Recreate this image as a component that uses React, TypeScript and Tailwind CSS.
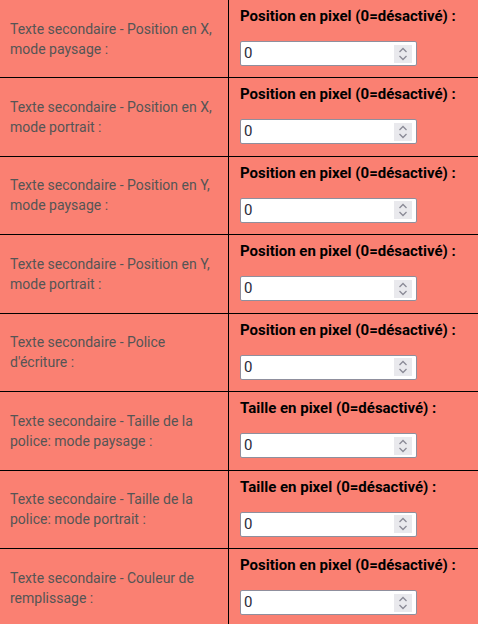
const rows = [
  { left: "Texte secondaire - Position en X, mode paysage :", label: "Position en pixel (0=désactivé) :" },
  { left: "Texte secondaire - Position en X, mode portrait :", label: "Position en pixel (0=désactivé) :" },
  { left: "Texte secondaire - Position en Y, mode paysage :", label: "Position en pixel (0=désactivé) :" },
  { left: "Texte secondaire - Position en Y, mode portrait :", label: "Position en pixel (0=désactivé) :" },
  { left: "Texte secondaire - Police d'écriture :", label: "Position en pixel (0=désactivé) :" },
  { left: "Texte secondaire - Taille de la police: mode paysage :", label: "Taille en pixel (0=désactivé) :" },
  { left: "Texte secondaire - Taille de la police: mode portrait :", label: "Taille en pixel (0=désactivé) :" },
  { left: "Texte secondaire - Couleur de remplissage :", label: "Position en pixel (0=désactivé) :" },
];

function NumberBox() {
  return (
    <div className="flex items-center w-[177px] h-[25px] bg-white border border-[#8f8f9d] rounded-[2px] pl-[3px] pr-[4px]">
      <input
        type="text"
        defaultValue="0"
        className="flex-1 min-w-0 outline-none bg-transparent text-[15px] text-[#2b2b3a] font-['Roboto',sans-serif]"
      />
      <div className="w-[18px] h-[18px] bg-[#e9e9ed] flex flex-col items-center justify-center gap-[2px]">
        <svg width="10" height="6" viewBox="0 0 10 6" fill="none" stroke="#8a8a96" strokeWidth="1.3">
          <polyline points="1.5 5 5 1.5 8.5 5" />
        </svg>
        <svg width="10" height="6" viewBox="0 0 10 6" fill="none" stroke="#8a8a96" strokeWidth="1.3">
          <polyline points="1.5 1 5 4.5 8.5 1" />
        </svg>
      </div>
    </div>
  );
}

export default function App() {
  return (
    <div className="w-[478px] h-[624px] overflow-hidden bg-[#fa8072] font-['Roboto',sans-serif]">
      {rows.map((row, i) => (
        <div
          key={i}
          className={`flex border-b border-black ${i === 0 ? "h-[78px]" : "h-[78.5px]"}`}
        >
          <div className="w-[229px] shrink-0 border-r border-black flex items-center pl-[10px] pr-[12px] text-[14px] leading-[20px] text-[#555555]">
            {row.left}
          </div>
          <div className="flex-1 pl-[11px] pt-[6px] flex flex-col gap-[15px]">
            <div className="text-[15px] leading-[20px] font-bold text-black">{row.label}</div>
            <NumberBox />
          </div>
        </div>
      ))}
    </div>
  );
}
